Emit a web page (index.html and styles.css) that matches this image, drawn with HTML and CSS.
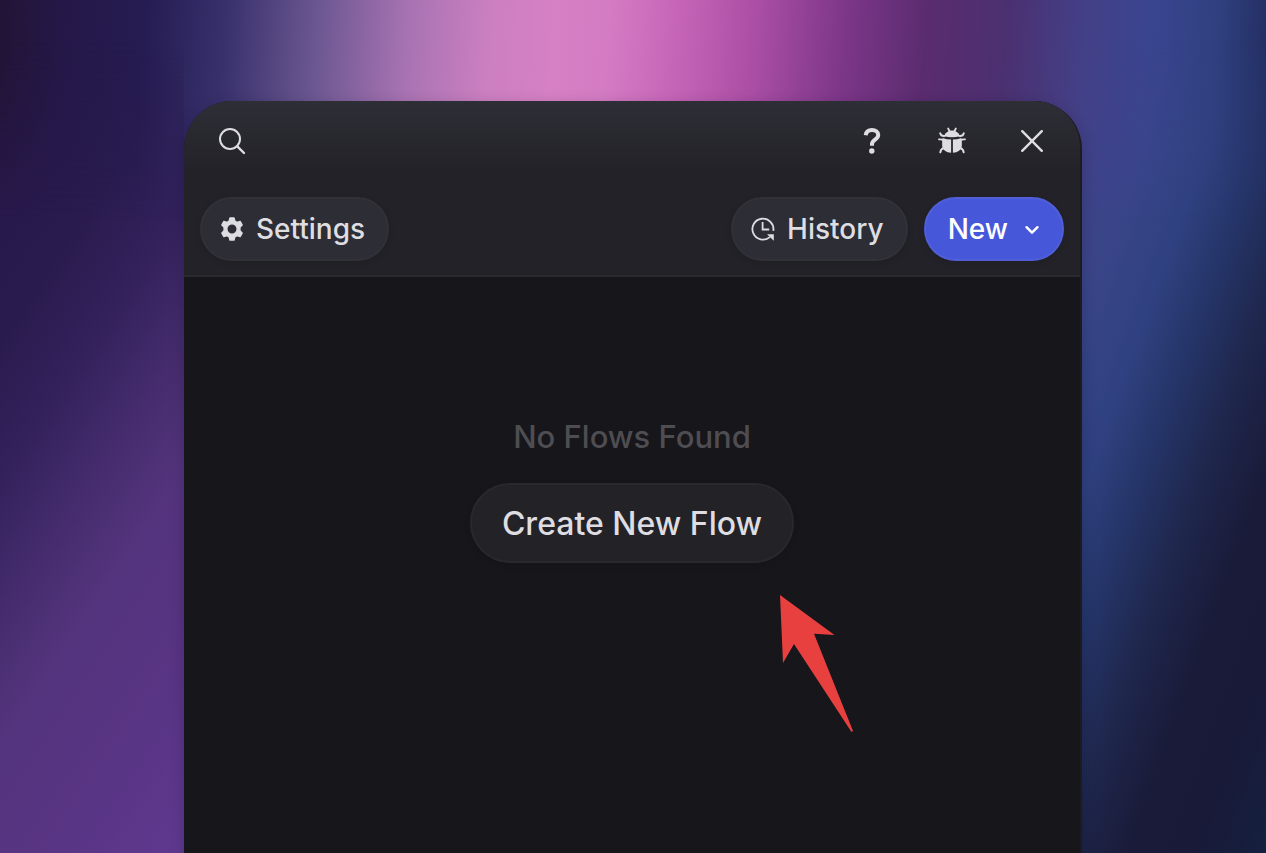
FILE: index.html
```html
<!DOCTYPE html>
<html lang="en">
<head>
<meta charset="utf-8">
<title>Flows</title>
<meta name="viewport" content="width=device-width, initial-scale=1">
<link rel="stylesheet" href="styles.css">
</head>
<body>
<main class="panel">
  <header class="panel-head">
    <div class="title-bar">
      <button class="icon-button" type="button" aria-label="Search">
        <svg class="icon" viewBox="0 0 32 32" fill="none" stroke="currentColor" stroke-width="2" stroke-linecap="round"><circle cx="14" cy="14" r="10"/><path d="M21.300 21.300 28 28" stroke-width="2.400"/></svg>
      </button>
      <div class="title-actions">
        <button class="icon-button" type="button" aria-label="Help">
          <svg class="icon" viewBox="0 0 32 32" fill="none" stroke="currentColor" stroke-width="4"><path d="M9.700 10.200C10.200 6.700 12.700 5.100 16 5.100c3.500 0 6.200 1.800 6.200 4.900 0 4.600-6.200 4.700-6.200 9v1.700"/><circle cx="15.800" cy="26" r="2.700" fill="currentColor" stroke="none"/></svg>
        </button>
        <button class="icon-button" type="button" aria-label="Report a bug">
          <svg class="icon" viewBox="0 0 32 32" fill="none" stroke="currentColor" stroke-width="1.900" stroke-linecap="round" stroke-linejoin="round">
            <path d="M12.200 3.600l1.400 2.600M19.800 3.600l-1.400 2.600M4.200 8.200c.5 2.200 2.200 3 4.800 2.700M27.800 8.200c-.5 2.200-2.200 3-4.800 2.700M3 14.400c1.500-.2 3 0 4.500.8M29 14.400c-1.500-.2-3 0-4.500.8M4.300 27.400c.2-2.400 1.400-3.700 3.600-4.400M27.700 27.400c-.2-2.400-1.400-3.700-3.600-4.400"/>
            <path d="M8 10.900C9.600 7.500 12.300 5.600 16 5.600s6.400 1.900 8 5.300C19 12.600 13 12.600 8 10.900z" fill="currentColor" stroke="none"/>
            <path d="M6.600 12.900c2.800 1 5.700 1.500 8.500 1.600v13.200c-4.800-.1-8.600-2.900-8.900-6.700-.2-2.800-.1-5.500.4-8.100zM25.400 12.900c-2.800 1-5.700 1.500-8.500 1.600v13.200c4.800-.1 8.600-2.900 8.900-6.700.2-2.800.1-5.500-.4-8.100z" fill="currentColor" stroke="none"/>
          </svg>
        </button>
        <button class="icon-button" type="button" aria-label="Close">
          <svg class="icon" viewBox="0 0 32 32" fill="none" stroke="currentColor" stroke-width="2.400" stroke-linecap="round"><path d="M6.200 6.200l19.600 19.600M25.800 6.200 6.200 25.800"/></svg>
        </button>
      </div>
    </div>
    <div class="toolbar">
      <button class="pill" type="button">
        <svg class="pill-icon" viewBox="0 0 24 24"><path fill="currentColor" stroke="currentColor" stroke-width="1.400" stroke-linejoin="round" fill-rule="evenodd" d="M10 .9h4l.8 3.100 2.200 1.300 3.100-.9 2 3.500L19.900 10.200v3.600l2.200 2.300-2 3.500-3.100-.9-2.200 1.300-.8 3.100h-4l-.8-3.100-2.200-1.300-3.100.9-2-3.500 2.200-2.300v-3.600L1.900 7.900l2-3.500 3.100.9 2.200-1.300zM12 6.800a5.200 5.200 0 1 0 0 10.400 5.200 5.200 0 0 0 0-10.400z"/></svg>
        <span>Settings</span>
      </button>
      <div class="toolbar-end">
        <button class="pill" type="button">
          <svg class="pill-icon" viewBox="0 0 24 24" fill="none" stroke="currentColor" stroke-width="1.800"><path d="M22.300 13.800A10.500 10.500 0 1 0 18.800 20.100M11.600 5v7.500h6.600"/><path d="M16 17.300h6.800v6.400z" fill="currentColor" stroke="none"/></svg>
          <span>History</span>
        </button>
        <button class="pill pill-primary" type="button">
          <span>New</span>
          <svg class="chevron" viewBox="0 0 16 16" fill="none" stroke="currentColor" stroke-width="2.400" stroke-linecap="round" stroke-linejoin="round"><path d="M2.500 6.200 8 11.700l5.500-5.500"/></svg>
        </button>
      </div>
    </div>
  </header>
  <section class="empty">
    <p class="empty-text">No Flows Found</p>
    <div class="empty-action">
      <button class="pill pill-large" type="button">Create New Flow</button>
      <svg class="pointer" viewBox="0 0 76 138" aria-hidden="true"><path fill="#e8403f" d="M0 0 54.500 40 34 38.800 73 136 71.500 137 14 49 3 68z"/></svg>
    </div>
  </section>
</main>
</body>
</html>
```
FILE: styles.css
```css
* { box-sizing: border-box; }

body {
  position: relative;
  display: flex;
  min-height: 100vh;
  margin: 0;
  padding: 101px 184px 0;
  color: #dedde1;
  font-family: Inter, "Liberation Sans", sans-serif;
  background: linear-gradient(94deg, #221436 0%, #251848 5%, #251c52 11%, #37306b 17%, #6b5791 24%, #a873b2 31%, #cb7fc1 37%, #d680c5 42%, #d47bc3 46%, #c766b8 51%, #ab4fa5 57%, #7c3688 64%, #5a2c6f 70%, #4b3070 76%, #434087 82%, #3a4590 87%, #30407f 92%, #202a5b 97%, #1f2b59 100%);
}

body::before {
  content: "";
  position: absolute;
  inset: 0;
  background:
    linear-gradient(124deg, #21153a 0%, #27184a 16%, #2a1b4e 30%, #32215b 42%, #432b6b 53%, #54347d 66%, #583483 80%, #5f398f 100%) left / 184px 100% no-repeat,
    linear-gradient(110deg, #47408a 0%, #3a4589 22%, #2f4180 36%, #253569 47%, #1f284f 58%, #1a1b39 72%, #181a38 86%, #15203f 100%) right / 184px 100% no-repeat;
  mask-image: linear-gradient(180deg, transparent 5%, #000 26%);
}

.panel {
  position: relative;
  display: flex;
  flex: 1;
  flex-direction: column;
  border-right: 2px solid #1c1b20;
  border-radius: 48px 48px 0 0;
  background: #17161b;
  box-shadow: 0 4px 16px rgba(10, 5, 30, .2);
}

.panel-head {
  border-bottom: 2px solid #2a292e;
  border-radius: 48px 46px 0 0;
  background: linear-gradient(180deg, #2e2e36 0, #232228 72px);
}

.title-bar,
.title-actions,
.toolbar,
.toolbar-end {
  display: flex;
  align-items: center;
}

.title-bar {
  justify-content: space-between;
  padding: 0 8px;
}

.toolbar {
  justify-content: space-between;
  padding: 16px 16px 14px;
}

.toolbar-end { gap: 16px; }

button {
  margin: 0;
  color: inherit;
  font: inherit;
  cursor: pointer;
}

.icon-button {
  display: grid;
  place-items: center;
  width: 80px;
  height: 80px;
  padding: 0;
  border: 0;
  background: none;
}

.icon {
  width: 32px;
  height: 32px;
}

.pill {
  display: flex;
  align-items: center;
  gap: 12px;
  height: 64px;
  padding: 0 22px 0 18px;
  border: 2px solid #323138;
  border-radius: 40px;
  background: #2d2d35;
  font-size: 28px;
  font-weight: 500;
  box-shadow: 0 2px 6px rgba(0, 0, 0, .12);
}

.pill-icon {
  width: 24px;
  height: 24px;
}

.pill-primary {
  gap: 16px;
  padding: 0 22px;
  border-color: #505ed8;
  background: #4658d9;
  color: #fff;
}

.chevron {
  width: 16px;
  height: 16px;
}

.empty {
  display: flex;
  flex-direction: column;
  align-items: center;
  gap: 26px;
  padding: 140px 0 0;
}

.empty-text {
  margin: 0;
  color: #4e4d52;
  font-size: 31px;
  font-weight: 500;
  line-height: 40px;
}

.empty-action { position: relative; }

.pill-large {
  height: 80px;
  padding: 0 30px;
  border-color: #29282e;
  background: #232227;
  font-size: 32px;
}

.pointer {
  position: absolute;
  top: 112px;
  right: -62px;
  width: 76px;
  height: 138px;
}
```
